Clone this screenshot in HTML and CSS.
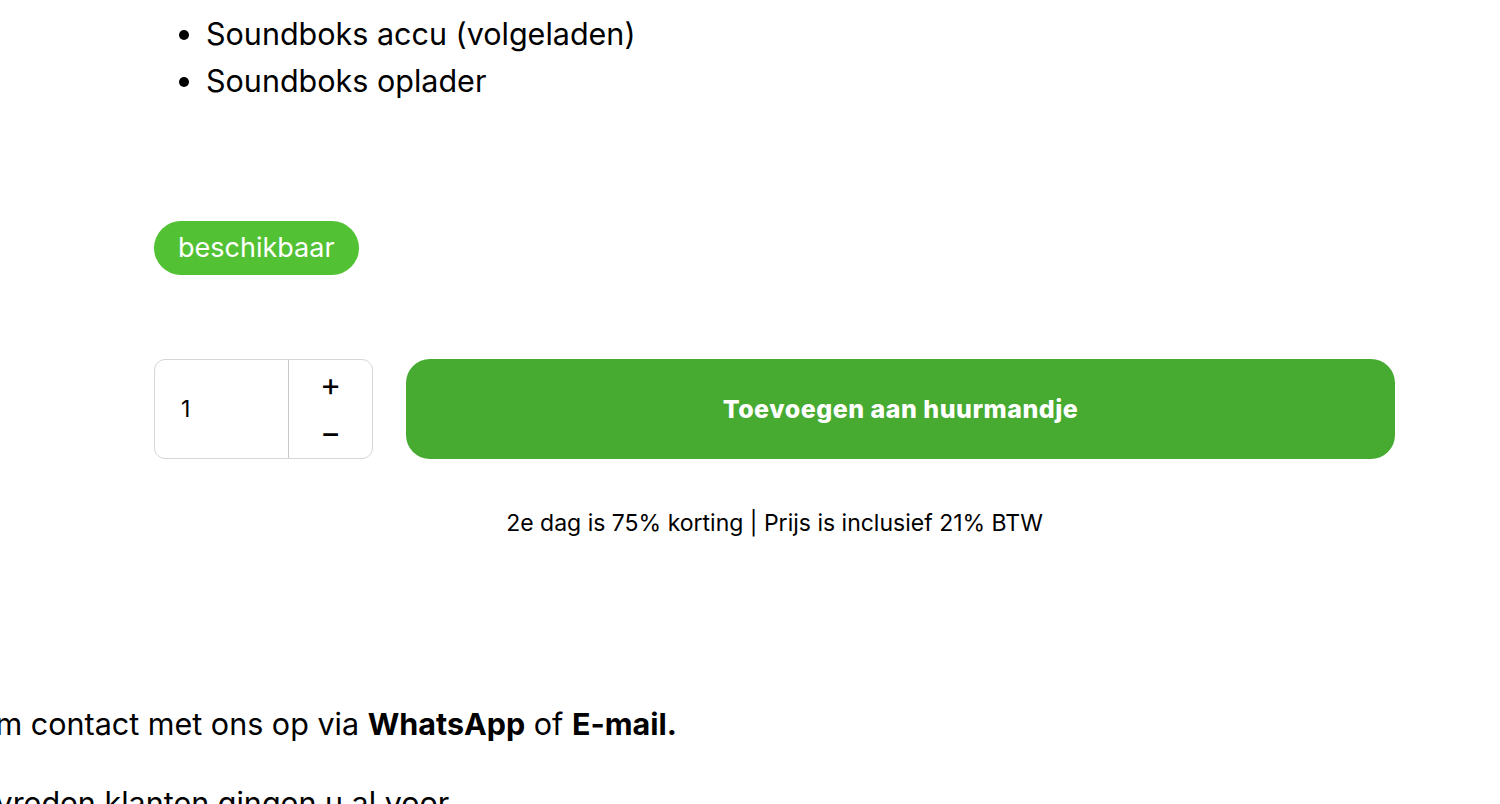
FILE: index.html
```html
<!DOCTYPE html>
<html lang="nl">
<head>
    <meta charset="UTF-8">
    <title>Soundboks huren</title>
    <link rel="stylesheet" href="styles.css">
</head>
<body>
<div class="product">
    <ul class="includes">
        <li>Soundboks accu (volgeladen)</li>
        <li>Soundboks oplader</li>
    </ul>

    <div class="stock"><span class="badge">beschikbaar</span></div>

    <div class="cart">
        <div class="qty">
            <div class="qty-value">1</div>
            <div class="qty-buttons">
                <button class="qty-btn">+</button>
                <button class="qty-btn">&minus;</button>
            </div>
        </div>
        <button class="add">Toevoegen aan huurmandje</button>
    </div>

    <p class="note">2e dag is 75% korting | Prijs is inclusief 21% BTW</p>
</div>

<div class="info">
    <p>Neem contact met ons op via <b>WhatsApp</b> of <b>E-mail.</b></p>
    <p class="reviews">Tevreden klanten gingen u al voor.</p>
</div>
</body>
</html>
```

FILE: styles.css
```css
body {
    margin: 0;
    font-family: Inter, "Noto Sans", sans-serif;
    color: #000;
    background: #fff;
    overflow: hidden;
}

.product {
    width: 1241px;
    margin-left: 154px;
}

.includes {
    margin: 10px 0 0;
    padding-left: 52px;
    font-size: 30.5px;
    line-height: 47px;
}

.stock {
    margin-top: 117px;
}

.badge {
    display: inline-block;
    height: 54px;
    line-height: 54px;
    padding: 0 24px;
    border-radius: 27px;
    background: #52c234;
    color: #fff;
    font-size: 27px;
}

.cart {
    display: flex;
    gap: 33px;
    margin-top: 84px;
}

.qty {
    display: flex;
    width: 217px;
    height: 98px;
    border: 1px solid #d6d6d6;
    border-radius: 11px;
}

.qty-value {
    width: 134px;
    border-right: 1px solid #c8c8c8;
    padding-left: 26px;
    box-sizing: border-box;
    line-height: 98px;
    font-size: 23px;
}

.qty-buttons {
    flex: 1;
    display: flex;
    flex-direction: column;
    padding: 0 0 2px;
}

.qty-btn {
    flex: 1;
    border: none;
    background: none;
    font-family: inherit;
    font-size: 32px;
    font-weight: 400;
    color: #000;
    cursor: pointer;
}

.add {
    flex: 1;
    height: 100px;
    border: none;
    border-radius: 24px;
    background: #47ab32;
    color: #fff;
    font-family: inherit;
    font-size: 25px;
    font-weight: 800;
    letter-spacing: 0.5px;
    cursor: pointer;
}

.note {
    margin: 50px 0 0;
    text-align: center;
    font-size: 23px;
}

.info {
    margin-left: -63px;
    margin-top: 168px;
    font-size: 30.5px;
}

.info p {
    margin: 0 0 42px;
}

.info .reviews {
    padding-left: 24px;
}
```
